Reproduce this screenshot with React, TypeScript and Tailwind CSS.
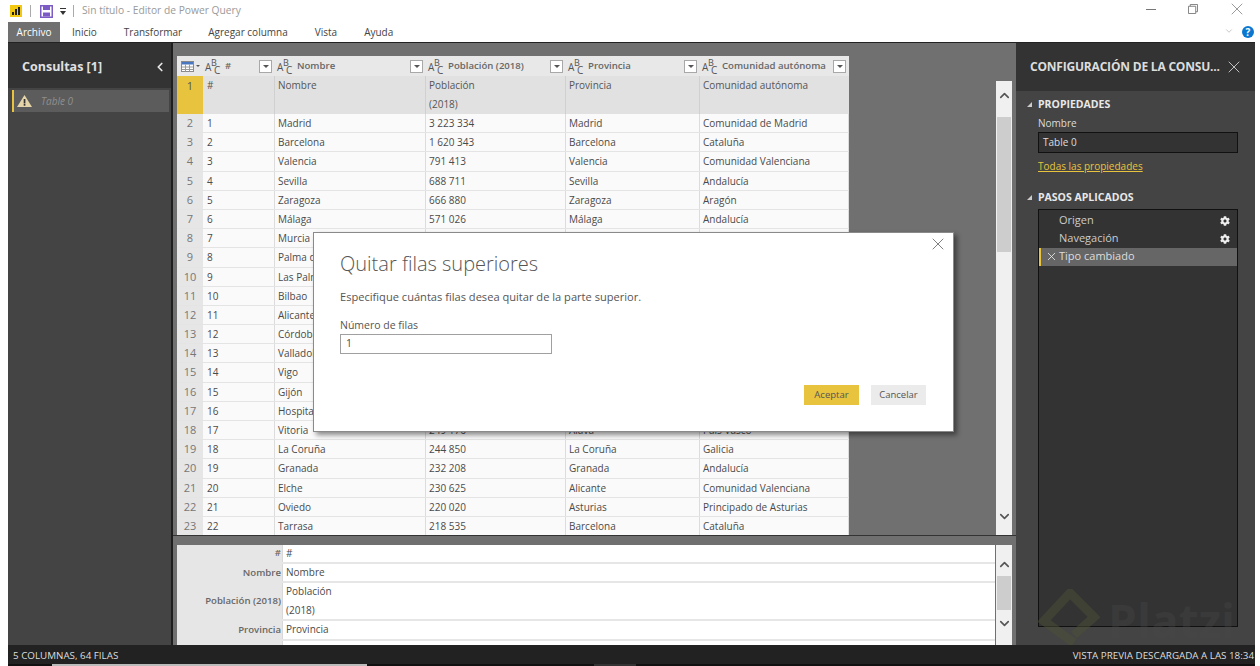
import { ChevronDown, ChevronLeft, ChevronUp, X } from 'lucide-react';
import { FaCog } from 'react-icons/fa';

const rows = [
  ['1', 'Madrid', '3 223 334', 'Madrid', 'Comunidad de Madrid'],
  ['2', 'Barcelona', '1 620 343', 'Barcelona', 'Cataluña'],
  ['3', 'Valencia', '791 413', 'Valencia', 'Comunidad Valenciana'],
  ['4', 'Sevilla', '688 711', 'Sevilla', 'Andalucía'],
  ['5', 'Zaragoza', '666 880', 'Zaragoza', 'Aragón'],
  ['6', 'Málaga', '571 026', 'Málaga', 'Andalucía'],
  ['7', 'Murcia', '447 182', 'Murcia', 'Región de Murcia'],
  ['8', 'Palma de Mallorca', '409 661', 'Baleares', 'Islas Baleares'],
  ['9', 'Las Palmas', '378 517', 'Las Palmas', 'Canarias'],
  ['10', 'Bilbao', '345 821', 'Vizcaya', 'País Vasco'],
  ['11', 'Alicante', '331 577', 'Alicante', 'Comunidad Valenciana'],
  ['12', 'Córdoba', '325 708', 'Córdoba', 'Andalucía'],
  ['13', 'Valladolid', '299 715', 'Valladolid', 'Castilla y León'],
  ['14', 'Vigo', '293 642', 'Pontevedra', 'Galicia'],
  ['15', 'Gijón', '271 843', 'Asturias', 'Principado de Asturias'],
  ['16', 'Hospitalet', '254 804', 'Barcelona', 'Cataluña'],
  ['17', 'Vitoria', '249 176', 'Álava', 'País Vasco'],
  ['18', 'La Coruña', '244 850', 'La Coruña', 'Galicia'],
  ['19', 'Granada', '232 208', 'Granada', 'Andalucía'],
  ['20', 'Elche', '230 625', 'Alicante', 'Comunidad Valenciana'],
  ['21', 'Oviedo', '220 020', 'Asturias', 'Principado de Asturias'],
  ['22', 'Tarrasa', '218 535', 'Barcelona', 'Cataluña'],
];

const tabs = [
  { label: 'Inicio', cls: 'ml-[12px]' },
  { label: 'Transformar', cls: 'ml-[27px]' },
  { label: 'Agregar columna', cls: 'ml-[26px]' },
  { label: 'Vista', cls: 'ml-[27px]' },
  { label: 'Ayuda', cls: 'ml-[27px]' },
];

const columns = ['#', 'Nombre', 'Población (2018)', 'Provincia', 'Comunidad autónoma'];

const gridCols = 'grid grid-cols-[26px_72px_151px_140px_134px_149px]';

function TypeIcon() {
  return (
    <span className="relative inline-block w-[16px] h-[14px] shrink-0 text-[10px] leading-none font-normal text-[#555]">
      <span className="absolute left-0 top-[3px]">A</span>
      <span className="absolute left-[6px] top-[-1px] text-[9px]">B</span>
      <span className="absolute left-[9px] top-[6px]">C</span>
    </span>
  );
}

function FilterButton() {
  return (
    <span className="w-[13px] h-[13px] bg-white border border-[#a8a8a8] flex items-center justify-center shrink-0">
      <span className="w-0 h-0 border-x-[3px] border-x-transparent border-t-[3px] border-t-[#555]" />
    </span>
  );
}

function Scrollbar({ className, thumb }: { className: string; thumb: string }) {
  return (
    <div className={`w-[16px] bg-[#f0f0f0] flex flex-col items-center justify-between relative ${className}`}>
      <ChevronUp size={15} strokeWidth={2.6} color="#555" />
      <div className={`absolute left-[1px] right-[1px] bg-[#cdcdcd] ${thumb}`} />
      <ChevronDown size={15} strokeWidth={2.6} color="#555" />
    </div>
  );
}

function DetailRow({ label, value, tall }: { label: string; value: string; tall?: boolean }) {
  return (
    <div className={`flex border-b-2 border-[#e6e6e6] shrink-0 ${tall ? 'h-[38px]' : 'h-[19.2px]'}`}>
      <div className="w-[106px] bg-[#e6e6e6] text-[#666] text-[9.6px] font-semibold flex items-center justify-end pr-[1px] border-r border-[#d8d8d8] whitespace-nowrap">{label}</div>
      <div className="flex-1 bg-white pl-[3px] flex items-center whitespace-pre-line leading-[19px]">{value}</div>
    </div>
  );
}

export default function App() {
  return (
    <div className="relative w-[1260px] h-[666px] overflow-hidden bg-white text-[10px] text-[#4a4a4a] font-['Open_Sans',sans-serif]">
      {/* title bar */}
      <div className="h-[22px] flex items-center relative">
        <svg className="ml-[10px]" width="12" height="12" viewBox="0 0 12 12">
          <rect width="12" height="12" fill="#f2c811" />
          <rect x="2" y="7" width="2" height="3" fill="#222" />
          <rect x="5" y="4" width="2" height="6" fill="#222" />
          <rect x="8" y="2" width="2" height="8" fill="#222" />
        </svg>
        <div className="ml-[8px] w-px h-[12px] bg-[#aaa]" />
        <svg className="ml-[9px]" width="13" height="13" viewBox="0 0 13 13">
          <path d="M.75.75h11.5v11.5H.75z" fill="none" stroke="#7c5cc4" strokeWidth="1.5" />
          <rect x="3" y="1" width="7" height="4" fill="#7c5cc4" />
          <rect x="3" y="7.5" width="7" height="4" fill="#7c5cc4" />
        </svg>
        <svg className="ml-[6px]" width="8" height="9" viewBox="0 0 8 9">
          <rect x="1" y="1" width="6" height="1" fill="#333" />
          <path d="M1 4h6L4 8z" fill="#333" />
        </svg>
        <div className="ml-[6px] w-px h-[12px] bg-[#aaa]" />
        <span className="ml-[8px] text-[#9a9a9a] text-[10.25px]">Sin título - Editor de Power Query</span>
        <div className="absolute right-[13px] top-[-1px] flex items-center">
          <div className="w-[10px] h-px bg-[#777]" />
          <svg className="ml-[32px]" width="10" height="10" viewBox="0 0 11 11" fill="none" stroke="#777">
            <path d="M.5 2.500h8v8h-8zM2.500 2.500v-2h8v8h-2" />
          </svg>
          <X className="ml-[29px]" size={20} strokeWidth={0.8} color="#666" />
        </div>
      </div>

      {/* ribbon tabs */}
      <div className="h-[20px] pl-[8px] flex items-center relative">
        <div className="w-[52px] h-full bg-[#707070] text-white flex items-center justify-center">Archivo</div>
        {tabs.map((t) => (
          <span key={t.label} className={`${t.cls} text-[#444]`}>{t.label}</span>
        ))}
        <ChevronDown className="absolute right-[26px] top-[4px]" size={10} strokeWidth={1} color="#777" />
        <div className="absolute right-[6px] top-[4px] w-[12px] h-[12px] rounded-full bg-[#0a78d0] text-white text-[10px] font-bold flex items-center justify-center leading-none">?</div>
      </div>

      {/* body */}
      <div className="ml-[8px] w-[1247px] h-[603px] flex border-t border-[#222]">
        {/* queries panel */}
        <div className="w-[165px] bg-[#444] border-r-2 border-[#1e1e1e] flex flex-col shrink-0">
          <div className="h-[45px] bg-[#333] pl-[14px] pr-[4px] pt-[3px] flex items-center justify-between text-[#e0e0e0] text-[12.5px] font-bold">
            Consultas [1]
            <ChevronLeft size={14} strokeWidth={3} color="#e6e6e6" />
          </div>
          <div className="mt-[2px] ml-[4px] mr-[2px] h-[22px] bg-[#5c5c5c] border-l-2 border-[#e8c33e] flex items-center pl-[2px] italic text-[#8f8f8f]">
            <svg width="17" height="14" viewBox="0 0 17 14" className="mr-[8px]">
              <path d="M8.500 1 16 13H1z" fill="#e6d5a8" />
              <rect x="7.700" y="5" width="1.700" height="4.500" fill="#333" />
              <rect x="7.700" y="10" width="1.700" height="1.700" fill="#333" />
            </svg>
            Table 0
          </div>
        </div>

        {/* main area */}
        <div className="flex-1 bg-[#707070] flex flex-col min-w-0">
          <div className="h-[493px] flex pl-[4px] pr-[4px] pt-[13px] border-b border-[#333] shrink-0">
            <div className="w-[672px] shrink-0 overflow-hidden">
              <div className={`${gridCols} h-[20px] bg-[#e8e8e8] text-[#666] text-[9.6px] font-semibold`}>
                <div className="flex items-center pl-[4px] gap-[2px]">
                  <svg width="13" height="11" viewBox="0 0 13 11">
                    <rect x=".5" y=".5" width="12" height="10" fill="#fff" stroke="#8a8a8a" />
                    <rect x="1" y="1" width="11" height="2.500" fill="#4a78c0" />
                    <path d="M4.500 3.500v7M8.500 3.500v7M1 6h11M1 8.500h11" stroke="#9a9a9a" />
                  </svg>
                  <span className="w-0 h-0 border-x-[2px] border-x-transparent border-t-[2px] border-t-[#555]" />
                </div>
                {columns.map((c) => (
                  <div key={c} className="flex items-center pl-[2px] pr-[3px] gap-[4px]">
                    <TypeIcon />
                    <span className="flex-1 whitespace-nowrap overflow-hidden">{c}</span>
                    <FilterButton />
                  </div>
                ))}
              </div>
              <div className={`${gridCols} h-[38px] bg-[#e1e1e1] leading-[19px] text-[#555]`}>
                <div className="bg-[#e8c33e] text-center text-[11px]">1</div>
                <div className="pl-[4px] border-r border-[#d0d0d0]">#</div>
                <div className="pl-[3px] border-r border-[#d0d0d0]">Nombre</div>
                <div className="pl-[3px] border-r border-[#d0d0d0]">Población<br />(2018)</div>
                <div className="pl-[3px] border-r border-[#d0d0d0]">Provincia</div>
                <div className="pl-[3px]">Comunidad autónoma</div>
              </div>
              {rows.map((r, i) => (
                <div key={r[0]} className={`${gridCols} h-[19.2px] bg-[#fafafa] border-b border-[#e4e4e4] items-stretch`}>
                  <div className="bg-[#e6e6e6] text-[#777] text-center text-[11px] leading-[18px]">{i + 2}</div>
                  {r.map((v, j) => (
                    <div key={j} className={`${j === 0 ? 'pl-[4px]' : 'pl-[3px]'} border-r border-[#dcdcdc] leading-[18px] whitespace-nowrap overflow-hidden`}>{v}</div>
                  ))}
                </div>
              ))}
            </div>
            <div className="flex-1" />
            <Scrollbar className="mt-[25px] pt-[7px] pb-[11px]" thumb="top-[36px] h-[135px]" />
          </div>

          <div className="flex-1 flex pl-[4px] pr-[4px] pt-[9px] min-h-0">
            <div className="flex-1 flex flex-col overflow-hidden bg-white">
              <DetailRow label="#" value="#" />
              <DetailRow label="Nombre" value="Nombre" />
              <DetailRow label="Población (2018)" value={'Población\n(2018)'} tall />
              <DetailRow label="Provincia" value="Provincia" />
              <DetailRow label="Comunidad autónoma" value="Comunidad autónoma" />
            </div>
            <Scrollbar className="ml-px pt-[12px] pb-[14px]" thumb="top-[31px] h-[34px]" />
          </div>
        </div>

        {/* settings panel */}
        <div className="w-[239px] shrink-0 bg-[#444] flex flex-col relative overflow-hidden text-[#ddd]">
          <div className="h-[48px] bg-[#333] pl-[14px] pr-[11px] flex items-center justify-between text-[12px] font-bold tracking-[-0.2px] whitespace-nowrap">
            CONFIGURACIÓN DE LA CONSU...
            <X size={20} strokeWidth={1} color="#ddd" />
          </div>
          <div className="mt-[6px] pl-[11px] flex items-center font-bold text-[10.5px] text-[#e8e8e8]">
            <span className="w-0 h-0 border-l-[5px] border-l-transparent border-b-[5px] border-b-[#ccc] mr-[6px]" />
            PROPIEDADES
          </div>
          <div className="mt-[3px] pl-[22px]">Nombre</div>
          <div className="mt-[1px] ml-[22px] w-[200px] h-[21px] bg-[#333] border border-[#111] pl-[4px] flex items-center shrink-0">Table 0</div>
          <div className="mt-[6px] ml-[22px] text-[#e8c33e] underline">Todas las propiedades</div>
          <div className="mt-[16px] pl-[11px] flex items-center font-bold text-[10.5px] text-[#e8e8e8]">
            <span className="w-0 h-0 border-l-[5px] border-l-transparent border-b-[5px] border-b-[#ccc] mr-[6px]" />
            PASOS APLICADOS
          </div>
          <div className="mt-[3px] ml-[22px] w-[200px] h-[418px] bg-[#333] border border-[#111] pt-[2px] shrink-0 text-[11px] text-[#ccc]">
            <div className="h-[18px] flex items-center justify-between pl-[20px] pr-[7px]">Origen <FaCog size={10} color="#eee" /></div>
            <div className="h-[18px] flex items-center justify-between pl-[20px] pr-[7px]">Navegación <FaCog size={10} color="#eee" /></div>
            <div className="h-[18px] flex items-center bg-[#666] border-l-2 border-[#e8c33e] pl-[4px] text-[#ddd] gap-[1px]">
              <X size={13} strokeWidth={1.5} color="#eee" />
              Tipo cambiado
            </div>
          </div>
          {/* watermark */}
          <svg className="absolute left-[22px] top-[546px]" width="62" height="62" viewBox="0 0 62 62" fill="none">
            <path d="M36 54 6 32 32 4l24 24-20 18" stroke="#4c5036" strokeWidth="9" strokeOpacity=".5" />
          </svg>
          <span className="absolute left-[92px] top-[552px] text-[46px] leading-[50px] font-bold text-[#4a4a4a] opacity-30">Platzi</span>
        </div>
      </div>

      {/* status bar */}
      <div className="ml-[8px] w-[1247px] h-[19px] bg-[#222] flex items-center justify-between pl-[5px] pr-[1px] pt-[3px] text-[#ddd] text-[9.8px] relative">
        <span>5 COLUMNAS, 64 FILAS</span>
        <span>VISTA PREVIA DESCARGADA A LAS 18:34</span>
      </div>
      <div className="ml-[8px] w-[1247px] h-[2px] bg-[#111] flex">
        <div className="ml-[44px] w-[315px] bg-[#bbb]" />
        <div className="ml-[227px] w-[42px] bg-[#333]" />
      </div>

      {/* remove top rows dialog */}
      <div className="absolute left-[313px] top-[232px] w-[641px] h-[200px] bg-white border border-[#8a8a8a] shadow-[3px_3px_5px_rgba(0,0,0,0.45)]">
        <X className="absolute right-[5px] top-[1px]" size={20} strokeWidth={0.9} color="#555" />
        <div className="pl-[26px] pt-[16px]">
          <div className="text-[20px] font-light leading-[30px] text-[#555]">Quitar filas superiores</div>
          <div className="mt-[10px] text-[11.1px] leading-[16px] text-[#555]">Especifique cuántas filas desea quitar de la parte superior.</div>
          <div className="mt-[13px] text-[10.5px] leading-[14px] text-[#555]">Número de filas</div>
          <div className="mt-[2px] w-[212px] h-[20px] border border-[#a0a0a0] pl-[5px] flex items-center text-[10.5px]">1</div>
        </div>
        <div className="absolute left-[490px] top-[152px] flex gap-[12px]">
          <button className="w-[55px] h-[20px] bg-[#e8c33e] text-[#555] text-[9.5px]">Aceptar</button>
          <button className="w-[55px] h-[20px] bg-[#ebebeb] text-[#555] text-[9.5px]">Cancelar</button>
        </div>
      </div>
    </div>
  );
}
